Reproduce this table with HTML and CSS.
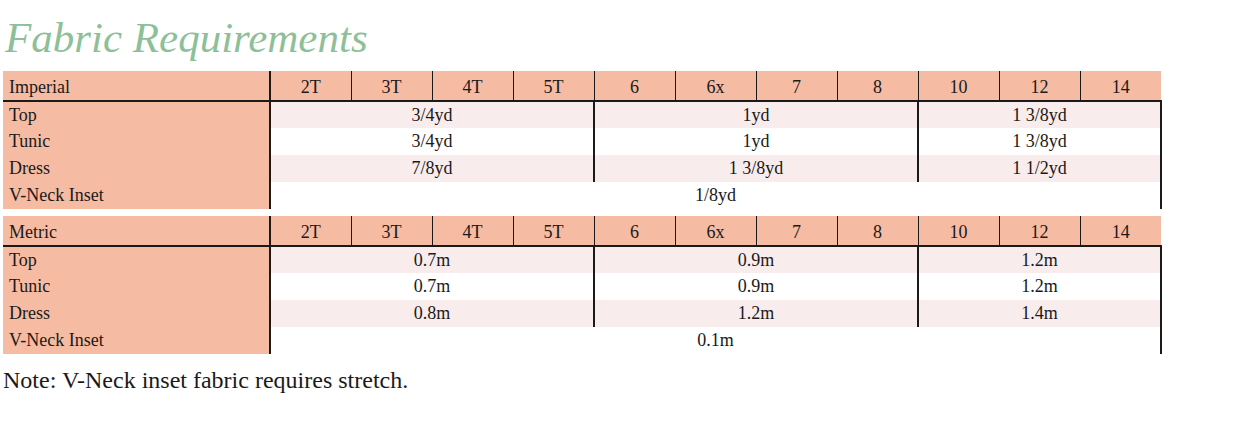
FILE: index.html
```html
<!DOCTYPE html>
<html>
<head>
<meta charset="utf-8">
<link rel="stylesheet" href="styles.css">
</head>
<body>
<h1 class="title">Fabric Requirements</h1>
<table class="req">
  <colgroup><col class="c-label"><col span="11" class="c-size"></colgroup>
  <tr class="head">
    <th class="label">Imperial</th><th>2T</th><th>3T</th><th>4T</th><th>5T</th><th>6</th><th>6x</th><th>7</th><th>8</th><th>10</th><th>12</th><th class="last">14</th>
  </tr>
  <tr class="stripe"><td class="label">Top</td><td colspan="4" class="grp">3/4yd</td><td colspan="4" class="grp">1yd</td><td colspan="3" class="grp">1 3/8yd</td></tr>
  <tr><td class="label">Tunic</td><td colspan="4" class="grp">3/4yd</td><td colspan="4" class="grp">1yd</td><td colspan="3" class="grp">1 3/8yd</td></tr>
  <tr class="stripe"><td class="label">Dress</td><td colspan="4" class="grp">7/8yd</td><td colspan="4" class="grp">1 3/8yd</td><td colspan="3" class="grp">1 1/2yd</td></tr>
  <tr><td class="label">V-Neck Inset</td><td colspan="11" class="grp">1/8yd</td></tr>
</table>
<table class="req">
  <colgroup><col class="c-label"><col span="11" class="c-size"></colgroup>
  <tr class="head">
    <th class="label">Metric</th><th>2T</th><th>3T</th><th>4T</th><th>5T</th><th>6</th><th>6x</th><th>7</th><th>8</th><th>10</th><th>12</th><th class="last">14</th>
  </tr>
  <tr class="stripe"><td class="label">Top</td><td colspan="4" class="grp">0.7m</td><td colspan="4" class="grp">0.9m</td><td colspan="3" class="grp">1.2m</td></tr>
  <tr><td class="label">Tunic</td><td colspan="4" class="grp">0.7m</td><td colspan="4" class="grp">0.9m</td><td colspan="3" class="grp">1.2m</td></tr>
  <tr class="stripe"><td class="label">Dress</td><td colspan="4" class="grp">0.8m</td><td colspan="4" class="grp">1.2m</td><td colspan="3" class="grp">1.4m</td></tr>
  <tr><td class="label">V-Neck Inset</td><td colspan="11" class="grp">0.1m</td></tr>
</table>
<p class="note">Note: V-Neck inset fabric requires stretch.</p>
</body>
</html>
```

FILE: styles.css
```css
body {
  margin: 0;
  background: #ffffff;
  font-family: "Liberation Serif", "Times New Roman", serif;
  color: #1a1a1a;
}
.title {
  margin: 0;
  padding: 14px 0 0 5px;
  height: 71px;
  box-sizing: border-box;
  font-family: "Liberation Serif", serif;
  font-style: italic;
  font-weight: normal;
  font-size: 43px;
  line-height: 48px;
  color: #8dbf98;
}
.req {
  margin-left: 3px;
  margin-bottom: 7px;
  border-collapse: collapse;
  table-layout: fixed;
  width: 1159px;
  font-size: 18px;
}
.c-label { width: 267px; }
.c-size { width: 81px; }
.req th, .req td {
  padding: 0;
  font-weight: normal;
  text-align: center;
  white-space: nowrap;
}
.head th {
  background: #f6bba3;
  border-right: 1px solid #1a1a1a;
  border-bottom: 2px solid #1a1a1a;
  padding-top: 3px;
}
.head th.last { border-right: none; }
.req tr { height: 27px; }
.req tr.head { height: 30px; }
.req .label {
  text-align: left;
  padding-left: 6px;
  background: #f6bba3;
  border-right: 2px solid #1a1a1a;
}
.stripe td { background: #f9ecec; }
.stripe td.label { background: #f6bba3; }
.grp { border-right: 2px solid #1a1a1a; }
.note {
  margin: 12px 0 0 3px;
  font-size: 24px;
  line-height: 28px;
}
```
